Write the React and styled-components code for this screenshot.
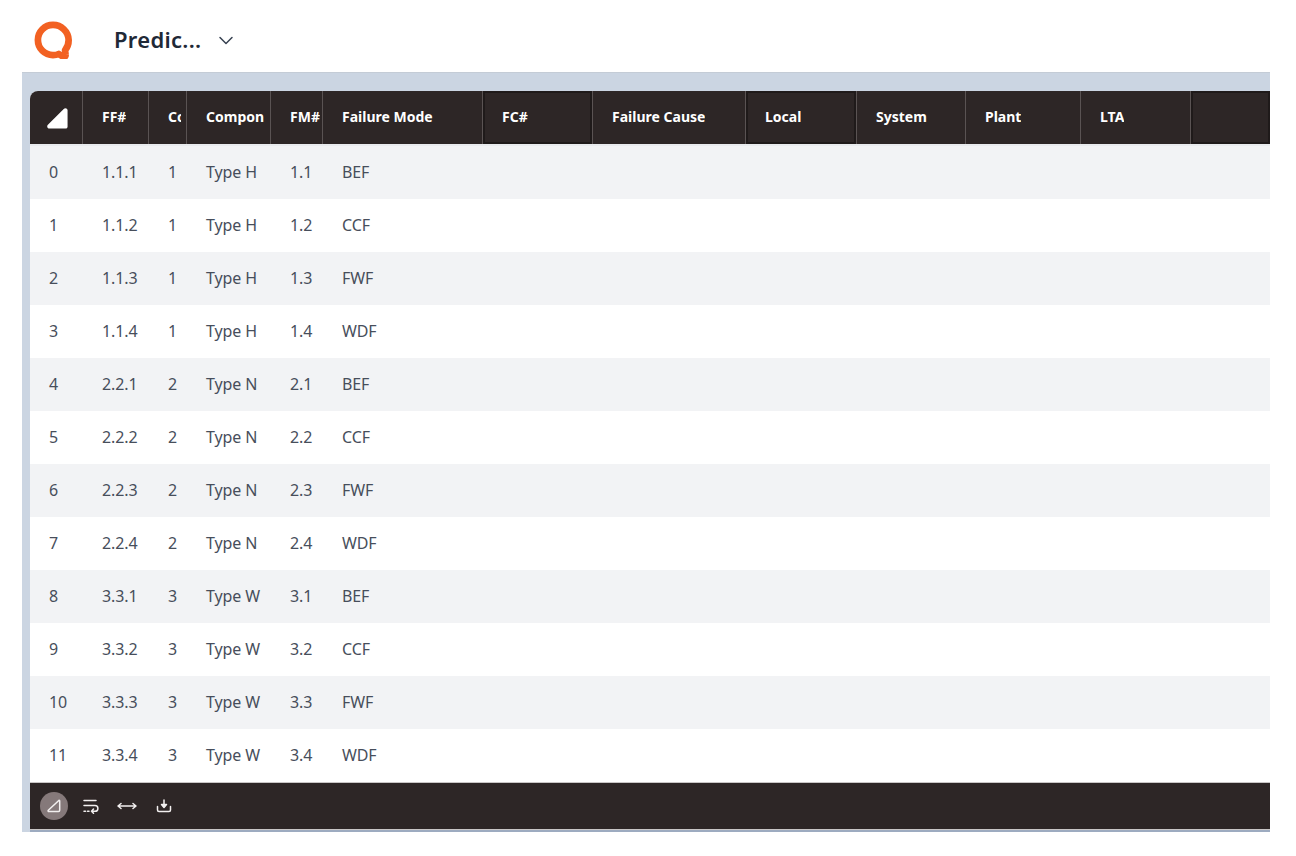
import React from "react";
import styled, { createGlobalStyle } from "styled-components";

const columns = "52px 66px 38px 84px 52px 160px 110px 153px 111px 109px 115px 110px 80px";

const headers = [
  { label: "FF#" },
  { label: "Co", clip: true },
  { label: "Compon" },
  { label: "FM#" },
  { label: "Failure Mode" },
  { label: "FC#", inset: true },
  { label: "Failure Cause" },
  { label: "Local", inset: true },
  { label: "System" },
  { label: "Plant" },
  { label: "LTA" },
  { label: "", inset: true },
];

const rows = [
  ["0", "1.1.1", "1", "Type H", "1.1", "BEF"],
  ["1", "1.1.2", "1", "Type H", "1.2", "CCF"],
  ["2", "1.1.3", "1", "Type H", "1.3", "FWF"],
  ["3", "1.1.4", "1", "Type H", "1.4", "WDF"],
  ["4", "2.2.1", "2", "Type N", "2.1", "BEF"],
  ["5", "2.2.2", "2", "Type N", "2.2", "CCF"],
  ["6", "2.2.3", "2", "Type N", "2.3", "FWF"],
  ["7", "2.2.4", "2", "Type N", "2.4", "WDF"],
  ["8", "3.3.1", "3", "Type W", "3.1", "BEF"],
  ["9", "3.3.2", "3", "Type W", "3.2", "CCF"],
  ["10", "3.3.3", "3", "Type W", "3.3", "FWF"],
  ["11", "3.3.4", "3", "Type W", "3.4", "WDF"],
];

const GlobalStyle = createGlobalStyle`
  body {
    margin: 0;
    background: #fff;
    font-family: "Noto Sans", "Open Sans", sans-serif;
  }
`;

const Page = styled.div`
  width: 1296px;
  height: 856px;
  overflow: hidden;
`;

const TopBar = styled.div`
  display: flex;
  align-items: center;
  height: 72px;
  padding: 8px 0 0 34px;
  box-sizing: border-box;
`;

const Title = styled.span`
  margin-left: 42px;
  padding-bottom: 2px;
  font-size: 22px;
  font-weight: 600;
  letter-spacing: 0.3px;
  color: #1f2937;
`;

const Chevron = styled.svg`
  margin-left: 17px;
  width: 16px;
  height: 16px;
`;

const Panel = styled.div`
  margin-left: 22px;
  width: 1248px;
  height: 760px;
  box-sizing: border-box;
  padding: 18px 0 0 8px;
  background: #cbd5e2;
  border-top: 1px solid #c4ccd6;
  overflow: hidden;
`;

const Table = styled.div`
  height: 741px;
  box-sizing: border-box;
  display: flex;
  flex-direction: column;
  overflow: hidden;
  border-radius: 8px 0 0 0;
  background: #fff;
  border-bottom: 2px solid #9dabc0;
`;

const HeadRow = styled.div`
  display: grid;
  grid-template-columns: ${columns};
  height: 55px;
  flex-shrink: 0;
  box-sizing: border-box;
  background: #2d2626;
  border-bottom: 2px solid #e9ebee;
`;

const HeadCell = styled.div`
  display: flex;
  align-items: center;
  min-width: 0;
  padding: 0 ${(props) => (props.$clip ? "5px" : "1px")} 2px 19px;
  box-sizing: border-box;
  font-size: 14px;
  font-weight: 700;
  color: #fff;
  border-left: 1px solid #5a5353;
  box-shadow: ${(props) => (props.$inset ? "inset 0 0 0 2px #1f1a1a" : "none")};
`;

const HeadLabel = styled.span`
  overflow: hidden;
  white-space: nowrap;
`;

const CornerCell = styled.div`
  display: flex;
  align-items: center;
  justify-content: center;
  padding-left: 3px;
`;

const BodyRow = styled.div`
  display: grid;
  grid-template-columns: ${columns};
  height: 53px;
  flex-shrink: 0;
  box-sizing: border-box;
  background: ${(props) => (props.$striped ? "#f2f3f5" : "#fff")};
`;

const BodyCell = styled.div`
  display: flex;
  align-items: center;
  padding: 0 0 1px 20px;
  white-space: nowrap;
  overflow: hidden;
  font-size: 16px;
  letter-spacing: -0.1px;
  color: #474e5b;

  &:first-child {
    padding-left: 19px;
  }
`;

const Footer = styled.div`
  display: flex;
  align-items: center;
  height: 48px;
  flex-shrink: 0;
  padding-left: 10px;
  background: #2d2626;
  border-top: 1px solid #c9c6c6;
  border-bottom: 1px solid #c9c6c6;
  box-sizing: border-box;
`;

const RoundButton = styled.div`
  display: flex;
  align-items: center;
  justify-content: center;
  width: 28px;
  height: 28px;
  border-radius: 50%;
  background: #85797a;
`;

const ToolIcon = styled.svg`
  width: ${(props) => props.$size}px;
  height: 16px;
  margin-left: ${(props) => props.$left}px;
  fill: none;
  stroke: #f2efef;
  stroke-width: 1.5;
  stroke-linecap: round;
  stroke-linejoin: round;
`;

const Logo = () => (
  <svg width="38" height="38" viewBox="2 2 34 34">
    <path
      d="M19 5.500C11.500 5.500 5.500 11.500 5.500 19S11.500 32.500 19 32.500c1.800 0 3.600-.3 5.200-1l3.600 2.300c1.900 1 2.700-.4 2.400-2l-.4-3.700c2-2.300 3.200-5.100 3.200-9.100C32.800 11.500 26.500 5.500 19 5.500Z"
      fill="none"
      stroke="#f26122"
      strokeWidth="6"
      strokeLinejoin="round"
    />
  </svg>
);

export default function App() {
  return (
    <Page>
      <GlobalStyle />
      <TopBar>
        <Logo />
        <Title>Predic...</Title>
        <Chevron viewBox="0 0 16 16" fill="none" stroke="#374151" strokeWidth="1.5" strokeLinecap="round" strokeLinejoin="round">
          <path d="M2 5.500 8 11.500 14 5.500" />
        </Chevron>
      </TopBar>
      <Panel>
        <Table>
          <HeadRow>
            <CornerCell>
              <svg width="23" height="24" viewBox="0 0 24 24">
                <path d="M18.500 2.500C20 1 22.500 2 22.500 4V21a2 2 0 0 1-2 2H3.500C1.500 23 .5 20.500 2 19Z" fill="#fff" />
              </svg>
            </CornerCell>
            {headers.map((item, index) => (
              <HeadCell key={index} $inset={item.inset} $clip={item.clip}>
                <HeadLabel>{item.label}</HeadLabel>
              </HeadCell>
            ))}
          </HeadRow>
          {rows.map((row, index) => (
            <BodyRow key={row[0]} $striped={index % 2 === 0}>
              {row.map((value, cellIndex) => (
                <BodyCell key={cellIndex}>{value}</BodyCell>
              ))}
            </BodyRow>
          ))}
          <Footer>
            <RoundButton>
              <ToolIcon $size={18} $left={0} viewBox="0 0 16 16">
                <path d="M12.800 2.500 2.300 12.300c-.5.5-.2 1.200.6 1.200h9.600c.8 0 1.200-.5 1.200-1.200V3c0-.6-.4-.8-.9-.5Z" />
              </ToolIcon>
            </RoundButton>
            <ToolIcon $size={16} $left={15} viewBox="0 0 16 16">
              <path d="M1 2.500h12M1 7.500h11a2.400 2.400 0 0 1 0 5.800H8.500M10.500 11 8.500 13.300l2 2M1 13.300h1.500M4.500 13.300H6" />
            </ToolIcon>
            <ToolIcon $size={20} $left={18} viewBox="0 0 20 16">
              <path d="M1 8h18M4 5.500 1 8l3 2.500M16 5.500 19 8l-3 2.500" />
            </ToolIcon>
            <ToolIcon $size={16} $left={19} viewBox="0 0 16 16">
              <path d="M1.500 8.500V12c0 1 .6 1.500 1.500 1.500h10c.9 0 1.500-.5 1.500-1.500V8.500M8 2v5" />
              <path d="M5.500 6.500h5L8 9.500Z" fill="#f2efef" />
            </ToolIcon>
          </Footer>
        </Table>
      </Panel>
    </Page>
  );
}
